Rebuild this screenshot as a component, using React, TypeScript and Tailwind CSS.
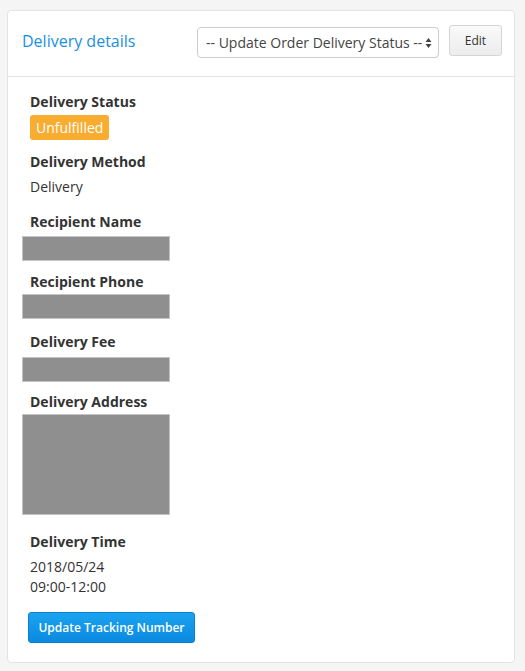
import React from 'react';

const Label: React.FC<{ children: React.ReactNode; className?: string }> = ({ children, className = '' }) => (
  <div className={`pl-2 text-[14px] leading-[20px] font-bold text-[#333] ${className}`}>{children}</div>
);

const Redacted: React.FC<{ h: string; mt: string }> = ({ h, mt }) => (
  <div className={`w-[148px] bg-[#8f8f8f] border border-[#c4c4c4] ${h} ${mt}`}></div>
);

export default function App() {
  return (
    <div className="min-h-screen bg-[#f5f5f5] pt-[10px] pl-[7px] pr-[10px] pb-2" style={{ fontFamily: '"Open Sans", sans-serif' }}>
      <div className="w-[508px] h-[653px] bg-white border border-[#e3e3e3] rounded-[4px]">
        {/* Header */}
        <div className="h-[66px] flex items-start justify-between pl-[14px] pr-[12px] pt-[14px] border-b border-[#e3e3e3]">
          <h2 className="mt-[5px] text-[16px] leading-[22px] text-[#1a8fe3] font-normal">Delivery details</h2>
          <div className="flex items-start gap-[10px]">
            <div className="w-[242px] h-[31px] mt-[2px] border border-[#ccc] rounded-[4px] flex items-center justify-between pl-[8px] pr-[6px] text-[14px] text-[#444]">
              <span>-- Update Order Delivery Status --</span>
              <svg width="7" height="12" viewBox="0 0 7 12">
                <path d="M3.5 1 L6.5 5 H0.5 Z" fill="#444" />
                <path d="M3.5 11 L6.5 7 H0.5 Z" fill="#444" />
              </svg>
            </div>
            <button className="w-[53px] h-[31px] border border-[#d5d5d5] rounded-[3px] bg-gradient-to-b from-[#fafafa] to-[#ececec] text-[12px] text-[#333]">
              Edit
            </button>
          </div>
        </div>

        {/* Body */}
        <div className="pl-[14px] pt-[15px]">
          <Label>Delivery Status</Label>
          <div className="ml-2 mt-[3px] inline-block h-[25px] px-[6px] rounded-[3px] bg-[#f8ac30] text-white text-[14px] leading-[25px]">
            Unfulfilled
          </div>

          <Label className="mt-[12px]">Delivery Method</Label>
          <div className="pl-2 mt-[5px] text-[14px] leading-[20px] text-[#333]">Delivery</div>

          <Label className="mt-[15px]">Recipient Name</Label>
          <Redacted h="h-[25px]" mt="mt-[4px]" />

          <Label className="mt-[11px]">Recipient Phone</Label>
          <Redacted h="h-[25px]" mt="mt-[2px]" />

          <Label className="mt-[13px]">Delivery Fee</Label>
          <Redacted h="h-[25px]" mt="mt-[5px]" />

          <Label className="mt-[10px]">Delivery Address</Label>
          <Redacted h="h-[101px]" mt="mt-[2px]" />

          <Label className="mt-[17px]">Delivery Time</Label>
          <div className="pl-2 mt-[5px] text-[14px] leading-[20px] text-[#333]">
            <div>2018/05/24</div>
            <div>09:00-12:00</div>
          </div>

          <button className="ml-[6px] mt-[15px] w-[167px] h-[31px] rounded-[3px] border border-[#0a7fd0] bg-gradient-to-b from-[#1aa3f0] to-[#0b8ae0] text-white text-[12px] font-semibold">
            Update Tracking Number
          </button>
        </div>
      </div>
    </div>
  );
}
